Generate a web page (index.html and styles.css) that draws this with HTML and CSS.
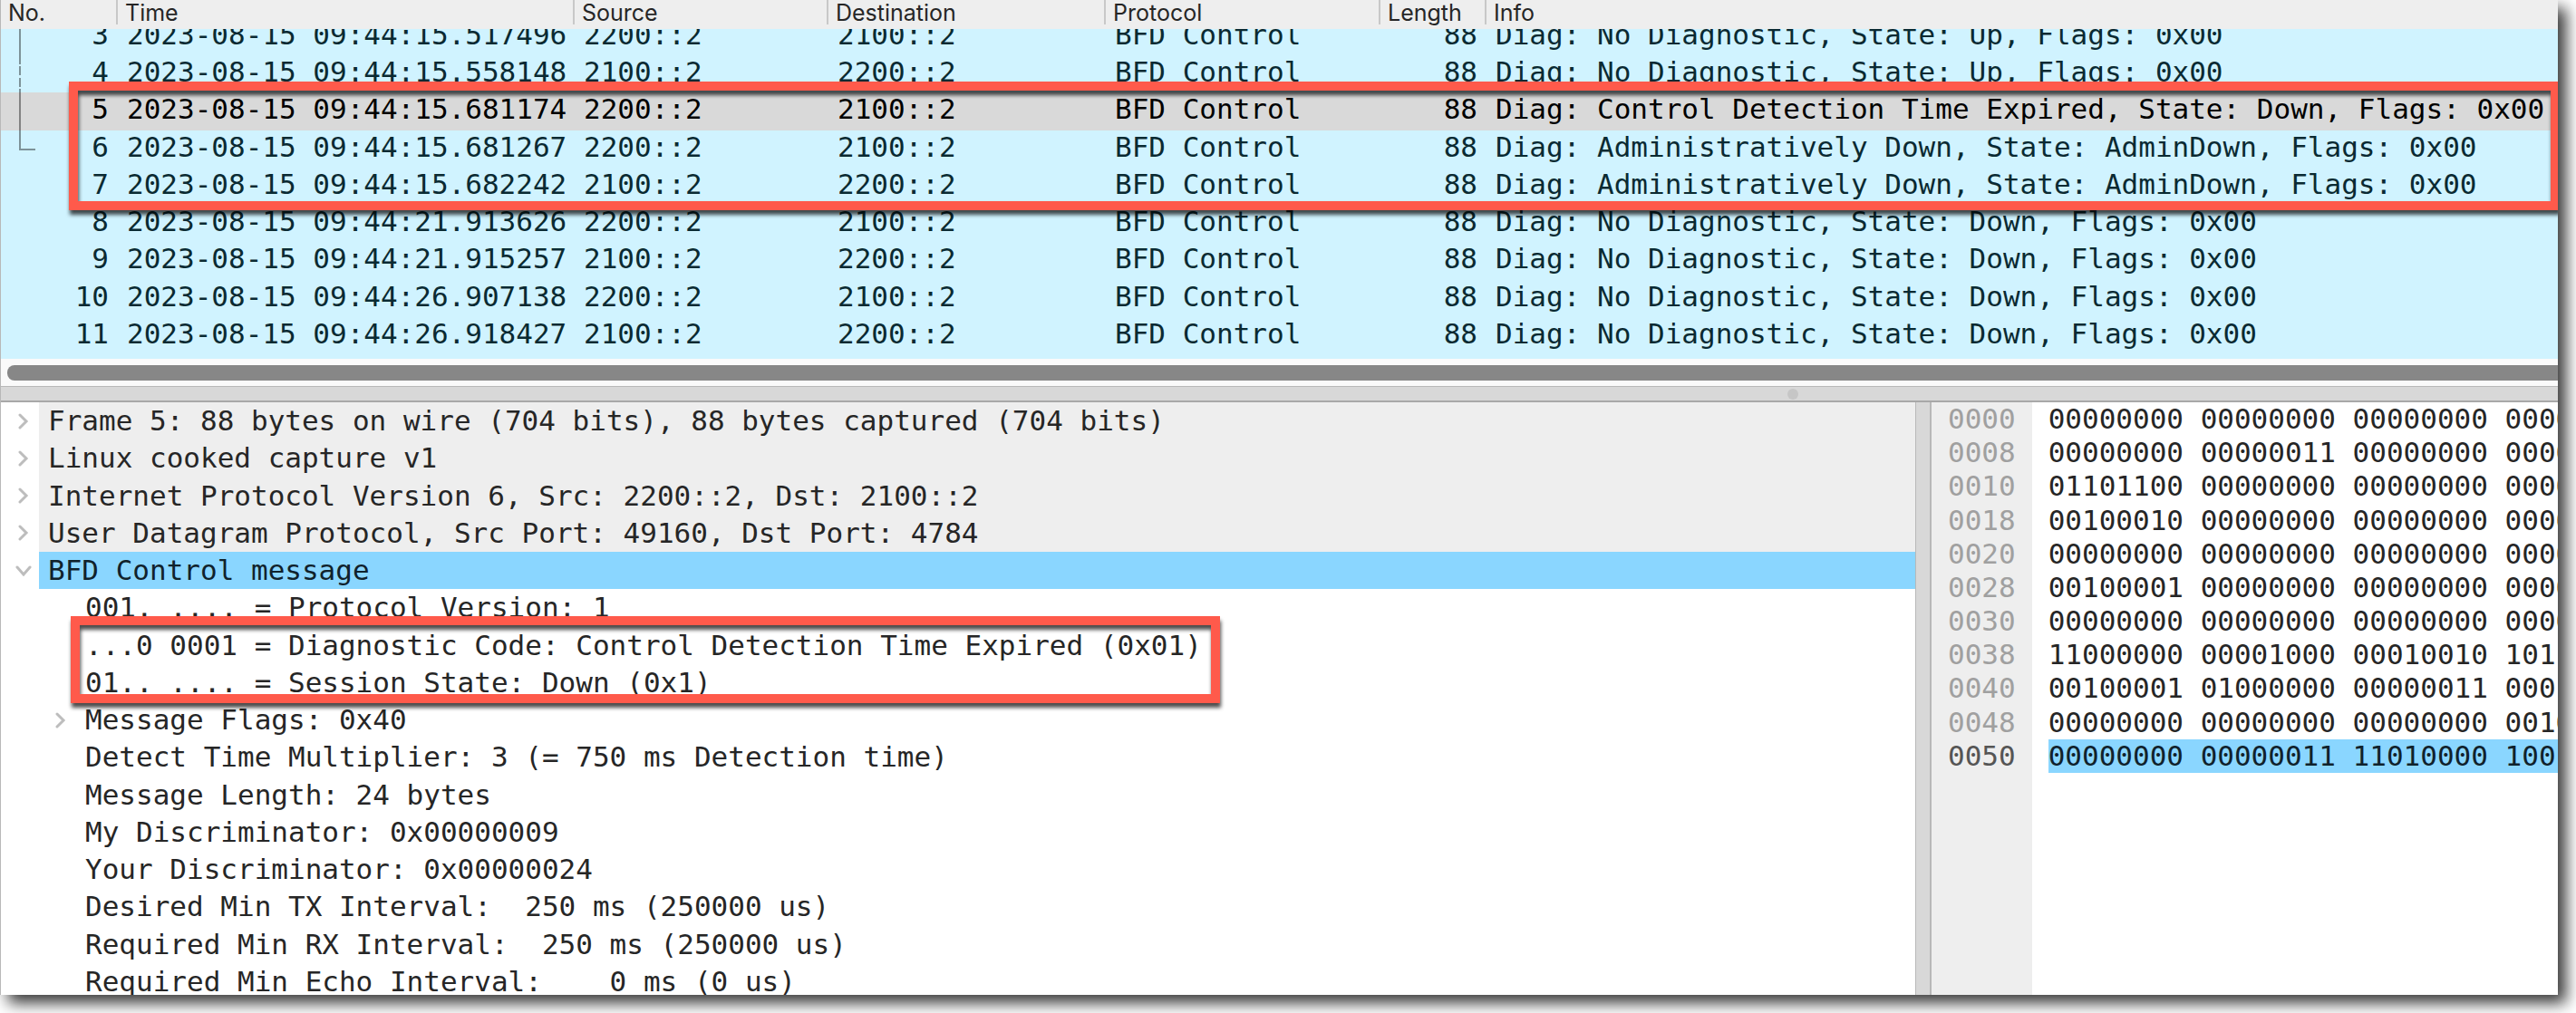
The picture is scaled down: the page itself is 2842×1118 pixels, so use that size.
FILE: index.html
```html
<!DOCTYPE html>
<html lang="en">
<head>
  <meta charset="UTF-8">
  <title>BFD capture</title>
  <meta name="viewport" content="width=device-width, initial-scale=1.0">
  <link rel="stylesheet" href="styles.css">
</head>
<body>
  <main class="window">

    <!-- Packet list -->
    <section class="packets">
      <table class="packet-table">
        <thead>
          <tr><th>No.</th><th>Time</th><th>Source</th><th>Destination</th><th>Protocol</th><th>Length</th><th>Info</th></tr>
        </thead>
        <tbody>
          <tr><td class="num">3</td><td>2023-08-15 09:44:15.517496</td><td>2200::2</td><td>2100::2</td><td>BFD Control</td><td class="num">88</td><td>Diag: No Diagnostic, State: Up, Flags: 0x00</td></tr>
          <tr><td class="num">4</td><td>2023-08-15 09:44:15.558148</td><td>2100::2</td><td>2200::2</td><td>BFD Control</td><td class="num">88</td><td>Diag: No Diagnostic, State: Up, Flags: 0x00</td></tr>
          <tr class="selected"><td class="num">5</td><td>2023-08-15 09:44:15.681174</td><td>2200::2</td><td>2100::2</td><td>BFD Control</td><td class="num">88</td><td>Diag: Control Detection Time Expired, State: Down, Flags: 0x00</td></tr>
          <tr><td class="num">6</td><td>2023-08-15 09:44:15.681267</td><td>2200::2</td><td>2100::2</td><td>BFD Control</td><td class="num">88</td><td>Diag: Administratively Down, State: AdminDown, Flags: 0x00</td></tr>
          <tr><td class="num">7</td><td>2023-08-15 09:44:15.682242</td><td>2100::2</td><td>2200::2</td><td>BFD Control</td><td class="num">88</td><td>Diag: Administratively Down, State: AdminDown, Flags: 0x00</td></tr>
          <tr><td class="num">8</td><td>2023-08-15 09:44:21.913626</td><td>2200::2</td><td>2100::2</td><td>BFD Control</td><td class="num">88</td><td>Diag: No Diagnostic, State: Down, Flags: 0x00</td></tr>
          <tr><td class="num">9</td><td>2023-08-15 09:44:21.915257</td><td>2100::2</td><td>2200::2</td><td>BFD Control</td><td class="num">88</td><td>Diag: No Diagnostic, State: Down, Flags: 0x00</td></tr>
          <tr><td class="num">10</td><td>2023-08-15 09:44:26.907138</td><td>2200::2</td><td>2100::2</td><td>BFD Control</td><td class="num">88</td><td>Diag: No Diagnostic, State: Down, Flags: 0x00</td></tr>
          <tr><td class="num">11</td><td>2023-08-15 09:44:26.918427</td><td>2100::2</td><td>2200::2</td><td>BFD Control</td><td class="num">88</td><td>Diag: No Diagnostic, State: Down, Flags: 0x00</td></tr>
        </tbody>
      </table>

      <!-- conversation bracket -->
      <svg class="bracket" width="20" height="136" viewBox="0 0 20 136" aria-hidden="true">
        <path d="M1 0V39M1 41V51M1 54V64M1 66V133H18" fill="none" stroke="#000" stroke-opacity=".4" stroke-width="2"/>
      </svg>
      <div class="highlight highlight-packets"></div>
    </section>

    <div class="scrollbar"><div class="thumb"></div></div>
    <div class="splitter"><span class="grip"></span></div>

    <div class="panes">
      <!-- Packet details -->
      <section class="details">
        <ul class="tree">
          <li><button class="toggle" aria-label="Expand"><svg width="12" height="18" viewBox="0 0 12 18"><path d="M2 2L9 9L2 16"/></svg></button><span class="label shade">Frame 5: 88 bytes on wire (704 bits), 88 bytes captured (704 bits)</span></li>
          <li><button class="toggle" aria-label="Expand"><svg width="12" height="18" viewBox="0 0 12 18"><path d="M2 2L9 9L2 16"/></svg></button><span class="label shade">Linux cooked capture v1</span></li>
          <li><button class="toggle" aria-label="Expand"><svg width="12" height="18" viewBox="0 0 12 18"><path d="M2 2L9 9L2 16"/></svg></button><span class="label shade">Internet Protocol Version 6, Src: 2200::2, Dst: 2100::2</span></li>
          <li><button class="toggle" aria-label="Expand"><svg width="12" height="18" viewBox="0 0 12 18"><path d="M2 2L9 9L2 16"/></svg></button><span class="label shade">User Datagram Protocol, Src Port: 49160, Dst Port: 4784</span></li>
          <li><button class="toggle" aria-label="Collapse"><svg width="18" height="12" viewBox="0 0 18 12"><path d="M2 2L9 10L16 2"/></svg></button><span class="label active">BFD Control message</span></li>
          <li class="child"><span class="label">001. .... = Protocol Version: 1</span></li>
          <li class="child"><span class="label">...0 0001 = Diagnostic Code: Control Detection Time Expired (0x01)</span></li>
          <li class="child"><span class="label">01.. .... = Session State: Down (0x1)</span></li>
          <li class="child"><button class="toggle" aria-label="Expand"><svg width="12" height="18" viewBox="0 0 12 18"><path d="M2 2L9 9L2 16"/></svg></button><span class="label">Message Flags: 0x40</span></li>
          <li class="child"><span class="label">Detect Time Multiplier: 3 (= 750 ms Detection time)</span></li>
          <li class="child"><span class="label">Message Length: 24 bytes</span></li>
          <li class="child"><span class="label">My Discriminator: 0x00000009</span></li>
          <li class="child"><span class="label">Your Discriminator: 0x00000024</span></li>
          <li class="child"><span class="label">Desired Min TX Interval:  250 ms (250000 us)</span></li>
          <li class="child"><span class="label">Required Min RX Interval:  250 ms (250000 us)</span></li>
          <li class="child"><span class="label">Required Min Echo Interval:    0 ms (0 us)</span></li>
        </ul>
        <div class="highlight highlight-details"></div>
      </section>

      <div class="divider"></div>

      <!-- Packet bytes -->
      <section class="bytes">
        <div class="offsets">
          <div class="dump">
            <span>0000</span>
            <span>0008</span>
            <span>0010</span>
            <span>0018</span>
            <span>0020</span>
            <span>0028</span>
            <span>0030</span>
            <span>0038</span>
            <span>0040</span>
            <span>0048</span>
            <span class="current">0050</span>
          </div>
        </div>
        <div class="bits">
          <div class="dump">
            <span>00000000 00000000 00000000 0000</span>
            <span>00000000 00000011 00000000 0000</span>
            <span>01101100 00000000 00000000 0000</span>
            <span>00100010 00000000 00000000 0000</span>
            <span>00000000 00000000 00000000 0000</span>
            <span>00100001 00000000 00000000 0000</span>
            <span>00000000 00000000 00000000 0000</span>
            <span>11000000 00001000 00010010 1011</span>
            <span>00100001 01000000 00000011 0001</span>
            <span>00000000 00000000 00000000 0010</span>
            <span class="active">00000000 00000011 11010000 1001</span>
          </div>
        </div>
      </section>
    </div>

  </main>
</body>
</html>
```

FILE: styles.css
```css
* {
  box-sizing: border-box;
}

body {
  margin: 0;
  padding: 0 20px 20px 0;
  height: 100vh;
  overflow: hidden;
  background: #fff;
  font-family: "DejaVu Sans Mono", monospace;
  font-size: 31px;
  color: #262626;
}

.window {
  display: flex;
  flex-direction: column;
  height: 100%;
  overflow: hidden;
  background: #fff;
  border-left: 1px solid #b8b8b8;
  box-shadow: 9px 9px 16px rgba(0, 0, 0, 0.78);
}

/* Packet list */
.packets {
  position: relative;
  height: 396px;
  flex: none;
  overflow: hidden;
  background: #d0f3ff;
}

.packet-table,
.packet-table thead {
  display: block;
}

.packet-table tr {
  display: grid;
  grid-template-columns: 129px 504px 280px 306px 303px 117px 1fr;
}

.packet-table thead {
  position: relative;
  z-index: 1;
  height: 32px;
  background: #eee;
}

.packet-table th {
  height: 27px;
  padding: 0 8px;
  border-right: 2px solid #c8c8c8;
  font-family: Inter, sans-serif;
  font-size: 25px;
  font-weight: 400;
  line-height: 28px;
  text-align: left;
}

.packet-table th:last-child {
  border-right: 0;
}

/* the list is scrolled a little, so the first row slides under the header */
.packet-table tbody {
  display: grid;
  grid-auto-rows: 1fr;
  height: 371px;
  margin-top: -12px;
  color: #0a2a32;
}

.packet-table td {
  padding: 0 10px;
  line-height: 36px;
  white-space: nowrap;
}

.packet-table .num {
  text-align: right;
}

.packet-table .selected {
  background: #d9d9d9;
  color: #000;
}

.bracket {
  position: absolute;
  top: 32px;
  left: 20px;
}

.highlight {
  position: absolute;
  z-index: 2;
  border: 10px solid #ff5a4b;
  filter: drop-shadow(1px 5px 2px rgba(0, 0, 0, 0.7));
}

.highlight-packets {
  top: 90px;
  left: 75px;
  right: -2px;
  height: 142px;
}

.highlight-details {
  top: 236px;
  left: 77px;
  width: 1268px;
  height: 96px;
}

.scrollbar {
  flex: none;
  height: 30px;
  padding: 7px 0 0 7px;
  background: #fafafa;
}

.thumb {
  height: 17px;
  border-radius: 8px 0 0 8px;
  background: #878787;
}

.splitter {
  position: relative;
  flex: none;
  height: 18px;
  border-top: 1px solid #b8b8b8;
  border-bottom: 2px solid #a8a8a8;
  background: #d8d8d8;
}

.grip {
  position: absolute;
  top: 2px;
  left: 70%;
  width: 12px;
  height: 12px;
  margin-left: -4px;
  border-radius: 50%;
  background: #c6c6c6;
}

.panes {
  display: flex;
  flex: 1;
  min-height: 0;
}

/* Packet details */
.details {
  position: relative;
  flex: 1;
  min-width: 0;
}

.tree {
  display: grid;
  grid-auto-rows: 1fr;
  height: 660px;
  margin: 0;
  padding: 0;
  list-style: none;
}

.tree li {
  display: flex;
}

.tree .child {
  position: relative;
  padding-left: 83px;
}

.toggle {
  display: flex;
  align-items: center;
  justify-content: center;
  width: 42px;
  padding: 0 0 0 8px;
  border: 0;
  background: none;
}

.child .toggle {
  position: absolute;
  left: 41px;
  height: 100%;
}

.toggle path {
  fill: none;
  stroke: #bdbdbd;
  stroke-width: 3;
  stroke-linecap: round;
}

.label {
  flex: 1;
  padding-left: 10px;
  line-height: 41px;
  white-space: pre;
}

.shade {
  background: #eee;
}

.active {
  background: #8ad6ff;
  color: #10222c;
}

.divider {
  width: 18px;
  border: solid #b8b8b8;
  border-width: 0 2px 0 1px;
  background: #d8d8d8;
}

/* Packet bytes */
.bytes {
  display: flex;
  flex: none;
  width: 691px;
  overflow: hidden;
}

.offsets {
  padding: 0 18px;
  background: #eee;
  color: #a0a0a0;
}

.bits {
  flex: 1;
  min-width: 0;
  padding-left: 18px;
}

.dump {
  display: grid;
  grid-auto-rows: 1fr;
  height: 409px;
  line-height: 37px;
  white-space: pre;
}

.current {
  color: #555;
}
```
